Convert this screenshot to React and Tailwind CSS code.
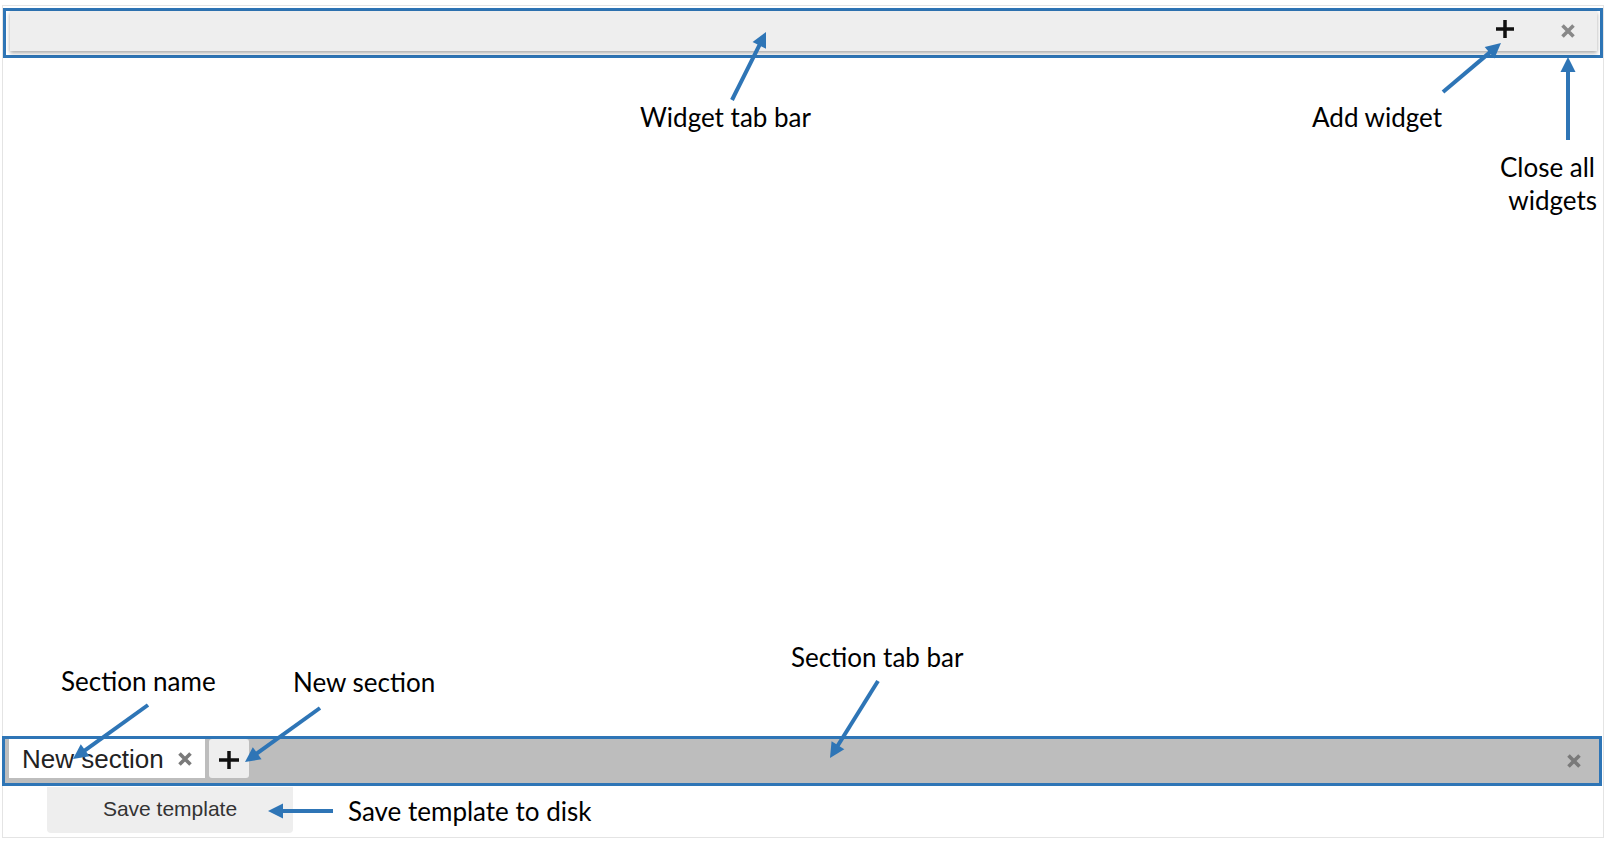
import React from 'react'

const BLUE = '#2e75b6'

function Arrow({ x1, y1, x2, y2 }) {
    const dx = x2 - x1
    const dy = y2 - y1
    const len = Math.hypot(dx, dy)
    const ux = dx / len
    const uy = dy / len
    const L = 15
    const W = 7.5
    const bx = x2 - ux * L
    const by = y2 - uy * L
    const pts = [
        [x2, y2],
        [bx - uy * W, by + ux * W],
        [bx + uy * W, by - ux * W]
    ]
    return (
        <g>
            <line x1={x1} y1={y1} x2={bx + ux * 2} y2={by + uy * 2} stroke={BLUE} strokeWidth="4" />
            <polygon points={pts.map(p => p.join(',')).join(' ')} fill={BLUE} />
        </g>
    )
}

function Plus({ w = 18, h = 18, color = '#111', sw = 3.5 }) {
    return (
        <svg width={w} height={h} viewBox={`0 0 ${w} ${h}`}>
            <path d={`M${w / 2} 0 V${h} M0 ${h / 2} H${w}`} stroke={color} strokeWidth={sw} />
        </svg>
    )
}

function Cross({ size = 14, color = '#888', sw = 3.6 }) {
    return (
        <svg width={size} height={size} viewBox={`0 0 ${size} ${size}`}>
            <path d={`M1.5 1.5 L${size - 1.5} ${size - 1.5} M${size - 1.5} 1.5 L1.5 ${size - 1.5}`} stroke={color} strokeWidth={sw} />
        </svg>
    )
}

export default function App() {
    const label = "absolute text-[26px] leading-none text-black font-['Lato','Noto_Sans',sans-serif] whitespace-nowrap"

    return (
        <div className="relative w-[1607px] h-[841px] bg-white overflow-hidden pt-[5px] pl-[2px]">
            {/* app frame */}
            <div className="w-[1602px] h-[833px] border border-[#e4e4e4] flex flex-col font-['Liberation_Sans',Arial,sans-serif]">
                {/* widget tab bar */}
                <div className="mt-[2px] h-[50px] w-full border-[3px] border-[#2e75b6] flex pl-[4px] pr-[3px]">
                    <div className="flex-1 h-[40px] bg-[#eeeeee] shadow-[0_2px_4px_rgba(0,0,0,0.35)] flex items-center justify-end gap-[47px] pr-[22px]">
                        <div className="-mt-[4px] flex"><Plus /></div>
                        <div className="-mt-[1px] flex"><Cross /></div>
                    </div>
                </div>

                <div className="flex-1" />

                {/* section tab bar */}
                <div className="-ml-px w-[1600px] h-[50px] border-[3px] border-[#2e75b6]">
                    <div className="h-full bg-[#bdbdbd] flex items-start">
                        <div className="ml-[4px] h-[39px] bg-white flex items-center pl-[13px] pr-[13px] gap-[14px]">
                            <span className="text-[26px] leading-none text-[#222]">New section</span>
                            <Cross color="#7a7a7a" />
                        </div>
                        <div className="ml-[4px] w-[40px] h-[39px] bg-[#eeeeee] rounded-[3px] flex items-center justify-center pt-[3px]">
                            <Plus w={20} h={18} />
                        </div>
                        <div className="ml-auto mr-[18px] self-center flex">
                            <Cross color="#7a7a7a" />
                        </div>
                    </div>
                </div>

                <div className="ml-[44px] mt-[1px] mb-[4px] w-[246px] h-[46px] bg-[#eeeeee] rounded-b-[4px] flex items-center justify-center pb-[3px] text-[21px] text-[#333]">
                    Save template
                </div>
            </div>

            {/* annotations */}
            <span className={`${label} left-[640px] top-[104px]`}>Widget tab bar</span>
            <span className={`${label} left-[1312px] top-[104px]`}>Add widget</span>
            <span className={`${label} right-[12px] top-[154px]`}>Close all</span>
            <span className={`${label} right-[10px] top-[187px]`}>widgets</span>
            <span className={`${label} left-[61px] top-[668px]`}>Section name</span>
            <span className={`${label} left-[293px] top-[669px]`}>New section</span>
            <span className={`${label} left-[791px] top-[644px]`}>Section tab bar</span>
            <span className={`${label} left-[348px] top-[798px]`}>Save template to disk</span>

            <svg className="absolute inset-0 pointer-events-none" width="1607" height="841">
                <Arrow x1={732} y1={100} x2={766} y2={32} />
                <Arrow x1={1443} y1={92} x2={1501} y2={43} />
                <Arrow x1={1568} y1={140} x2={1568} y2={57} />
                <Arrow x1={148} y1={705} x2={73} y2={759} />
                <Arrow x1={320} y1={708} x2={245} y2={762} />
                <Arrow x1={878} y1={681} x2={830} y2={758} />
                <Arrow x1={333} y1={811} x2={268} y2={811} />
            </svg>
        </div>
    )
}
